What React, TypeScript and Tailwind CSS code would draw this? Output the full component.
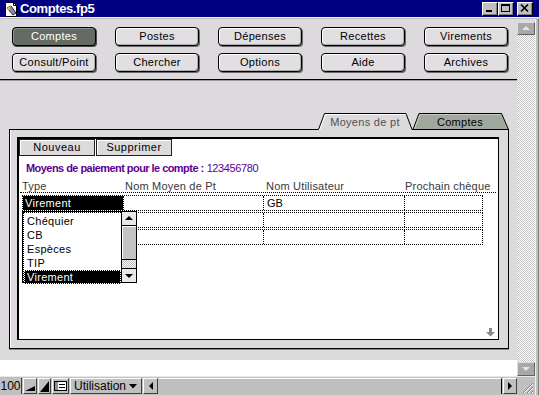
function NavButton({ label, active = false }: { label: string; active?: boolean }) {
  return (
    <div
      className={
        active
          ? "flex h-[19px] w-[84px] items-center justify-center rounded-[4px] border border-black bg-[#646b64] tracking-[0.3px] text-white shadow-[inset_1px_1px_0_#8c928c,1px_1px_0_#4a4a4a]"
          : "flex h-[19px] w-[84px] items-center justify-center rounded-[4px] border border-black bg-[#e2dfe2] tracking-[0.3px] shadow-[inset_1px_1px_0_#ffffff,inset_-1px_-1px_0_#aeabae,1px_1px_0_#6a6a6a]"
      }
    >
      {label}
    </div>
  );
}

function TitleIcon() {
  return (
    <svg width="16" height="16" viewBox="0 0 16 16">
      <path d="M2.5 1.5H10.5L13.5 4.5V15.5H2.5Z" fill="#fff" stroke="#000" />
      <path d="M10.5 1.5V4.5H13.5" fill="none" stroke="#000" />
      <path d="M4 7L8 5L13 12L10 14Z" fill="#8a8fb0" stroke="#000" strokeWidth="0.8" />
      <path d="M4 7L6 10L8 5Z" fill="#e8c040" />
    </svg>
  );
}

function WinButton({ kind }: { kind: "min" | "max" | "close" }) {
  return (
    <div className="flex h-[14px] w-[16px] items-center justify-center border border-b-black border-l-white border-r-black border-t-white bg-[#c0c0c0] shadow-[inset_-1px_-1px_0_#808080]">
      <svg width="10" height="9" viewBox="0 0 10 9">
        {kind === "min" && <rect x="1" y="6" width="6" height="2" fill="#000" />}
        {kind === "max" && (
          <>
            <rect x="0.5" y="0.5" width="8" height="7" fill="none" stroke="#000" />
            <rect x="0.5" y="0.5" width="8" height="1.5" fill="#000" />
          </>
        )}
        {kind === "close" && <path d="M1 0.5L8 7.5M8 0.5L1 7.5" stroke="#000" strokeWidth="1.6" />}
      </svg>
    </div>
  );
}

function ArrowBox({ dir, dim = false }: { dir: "up" | "down" | "left" | "right"; dim?: boolean }) {
  const fill = dim ? "#e4e4e4" : "#000";
  const d =
    dir === "up"
      ? "M1 6L5 2L9 6Z"
      : dir === "down"
      ? "M1 3L5 7L9 3Z"
      : dir === "left"
      ? "M7 1L3 5L7 9Z"
      : "M3 1L7 5L3 9Z";
  return (
    <svg width="10" height="10" viewBox="0 0 10 10">
      <path d={d} fill={fill} />
    </svg>
  );
}

function TabStrip() {
  return (
    <div className="relative ml-[9px] mt-[32px] h-[17px] w-[500px]">
      <svg className="absolute inset-0" width="500" height="17" viewBox="0 0 500 17">
        <path d="M0 16.5H309.5" stroke="#000" />
        <path d="M309.5 16.5L315.5 0.5H397L403 16.5" fill="#dddadd" stroke="#000" />
        <path d="M311 16.5L316.5 1.5H396.5" fill="none" stroke="#fff" />
        <path d="M404 16.5L410 0.5H492.5L499.5 16.5Z" fill="#a1a99f" stroke="#000" />
        <path d="M405.5 16L411 1.5H492" fill="none" stroke="#c8cec6" />
        <path d="M403 16.5H500" stroke="#000" />
      </svg>
      <div className="relative flex h-[17px] items-center pl-[309px] pt-[1px] tracking-[0.3px]">
        <span className="w-[94px] text-center text-[#505050]">Moyens de pt</span>
        <span className="w-[96px] text-center">Comptes</span>
      </div>
    </div>
  );
}

function Panel() {
  const items = ["Chéquier", "CB", "Espèces", "TIP", "Virement"];
  return (
    <div className="ml-[9px] h-[219px] w-[500px] border-x border-b border-black bg-[#dddadd] pl-[7px] pt-[7px] shadow-[inset_1px_0_0_#ffffff,0_1px_0_#8a8a8a]">
      <div className="relative h-[203px] w-[482px] border-b border-l-2 border-r border-t-2 border-black bg-white">
        <div className="flex">
          <div className="h-[17px] w-[76px] border border-[#202020] bg-[#dddadd] text-center leading-[15px] tracking-[0.5px] shadow-[inset_1px_1px_0_#ffffff]">
            Nouveau
          </div>
          <div className="ml-[1px] h-[17px] w-[76px] border border-[#202020] bg-[#dddadd] text-center leading-[15px] tracking-[0.5px] shadow-[inset_1px_1px_0_#ffffff]">
            Supprimer
          </div>
        </div>

        <div className="mt-[5px] pl-[7px] leading-[14px] text-[#5e0092]">
          <span className="font-bold tracking-[-0.55px]">Moyens de paiement pour le compte :</span>{" "}
          <span className="tracking-[-0.4px]">123456780</span>
        </div>

        {/* column headers */}
        <div className="ml-[1px] mt-[6px] flex h-[12px] w-[476px] border-b border-dotted border-black pl-[2px] leading-[11px] tracking-[0.2px] text-[#383838]">
          <span className="w-[103px]">Type</span>
          <span className="w-[141px]">Nom Moyen de Pt</span>
          <span className="w-[139px]">Nom Utilisateur</span>
          <span>Prochain chèque</span>
        </div>

        {/* rows */}
        <div className="ml-[3px] mt-[2px] flex flex-col gap-[1px]">
          {[0, 1, 2].map(i => (
            <div key={i} className="flex h-[16px] w-[461px] border border-dotted border-black leading-[14px]">
              {i === 0 ? (
                <div className="w-[100px] bg-black pl-[2px] tracking-[0.3px] text-white">Virement</div>
              ) : (
                <div className="w-[100px]" />
              )}
              <div className="w-[140px] border-l border-dotted border-black" />
              <div className="w-[141px] border-l border-dotted border-black pl-[3px]">{i === 0 ? "GB" : ""}</div>
              <div className="flex-1 border-l border-dotted border-black" />
            </div>
          ))}
        </div>

        {/* open popup list */}
        <div className="absolute left-[3px] top-[72px] flex h-[72px] w-[115px] border border-black bg-white tracking-[0.3px]">
          <div className="flex w-[99px] flex-col border-l border-t border-dotted border-black pt-[1px]">
            {items.map(it =>
              it === "Virement" ? (
                <div key={it} className="h-[14px] border border-dotted border-white bg-black pl-[2px] leading-[12px] text-white">
                  {it}
                </div>
              ) : (
                <div key={it} className="h-[14px] pl-[3px] leading-[14px]">
                  {it}
                </div>
              )
            )}
          </div>
          <div className="flex w-[15px] flex-col border-l border-black">
            <div className="flex h-[14px] items-center justify-center border-b border-black bg-[#e8e8e8]">
              <ArrowBox dir="up" />
            </div>
            <div className="h-[34px] border-b border-black bg-[#c4c4c4] shadow-[inset_1px_1px_0_#ffffff]" />
            <div className="flex-1 bg-[repeating-conic-gradient(#ffffff_0%_25%,#b8b8b8_0%_50%)] bg-[length:2px_2px]" />
            <div className="flex h-[14px] items-center justify-center border-t border-black bg-[#e8e8e8]">
              <ArrowBox dir="down" />
            </div>
          </div>
        </div>

        <svg className="absolute bottom-[2px] right-[3px]" width="9" height="9" viewBox="0 0 9 9">
          <path d="M3 0H6V4H9L4.5 8.5L0 4H3Z" fill="#8a8a8a" />
        </svg>
      </div>
    </div>
  );
}

function StatusBar() {
  return (
    <div className="flex h-[19px] items-center gap-[1px] border-t border-[#e8e8e8] bg-[#c0c0c0] text-[12px]">
      <div className="flex h-[16px] w-[22px] items-center justify-center border-r border-[#404040] leading-none">100</div>
      <div className="flex h-[16px] w-[14px] items-end justify-center border border-b-[#404040] border-l-white border-r-[#404040] border-t-white pb-[2px]">
        <svg width="10" height="6" viewBox="0 0 10 6">
          <path d="M0 6L10 1V6Z" fill="#000" />
        </svg>
      </div>
      <div className="flex h-[16px] w-[13px] items-end justify-center border border-b-[#404040] border-l-white border-r-[#404040] border-t-white pb-[1px]">
        <svg width="9" height="11" viewBox="0 0 9 11">
          <path d="M0 11L9 0V11Z" fill="#000" />
        </svg>
      </div>
      <div className="flex h-[16px] w-[17px] items-center justify-center border border-b-[#404040] border-l-white border-r-[#404040] border-t-white">
        <svg width="13" height="10" viewBox="0 0 13 10">
          <rect x="0.5" y="0.5" width="12" height="9" fill="#fff" stroke="#000" />
          <rect x="1" y="1" width="3" height="8" fill="#909090" />
          <path d="M5 3.5H11M5 6.5H11" stroke="#000" />
        </svg>
      </div>
      <div className="flex h-[16px] w-[72px] items-center border border-b-[#404040] border-l-white border-r-[#404040] border-t-white pl-[3px] leading-none">
        <span className="w-[55px]">Utilisation</span>
        <svg width="8" height="5" viewBox="0 0 8 5">
          <path d="M0 0H8L4 4.5Z" fill="#000" />
        </svg>
      </div>
      <div className="flex h-[16px] w-[15px] items-center justify-center border border-b-[#404040] border-l-white border-r-[#404040] border-t-white">
        <ArrowBox dir="left" />
      </div>
      <div className="h-[16px] flex-1 border-r border-t border-r-black border-t-white bg-[#c0c0c0]" />
      <div className="flex h-[16px] w-[14px] items-center justify-center border border-b-[#404040] border-l-white border-r-[#404040] border-t-white">
        <ArrowBox dir="right" />
      </div>
    </div>
  );
}

export default function App() {
  return (
    <div className="flex h-[395px] w-[539px] flex-col overflow-hidden bg-[#c0c0c0] font-['Liberation_Sans',Arial,sans-serif] text-[11px] text-black">
      {/* title bar */}
      <div className="flex h-[17px] items-center bg-[#000080] pl-[3px]">
        <TitleIcon />
        <span className="ml-[1px] text-[13px] font-bold tracking-[-0.4px] text-white">Comptes.fp5</span>
        <div className="ml-auto mr-[6px] flex items-center">
          <WinButton kind="min" />
          <WinButton kind="max" />
          <div className="w-[3px]" />
          <WinButton kind="close" />
        </div>
      </div>
      <div className="h-[2px] border-t border-[#f4f4f4] bg-[#c0c0c0]" />

      <div className="flex flex-1">
        <div className="flex w-[517px] flex-col">
          {/* layout area */}
          <div className="flex h-[341px] flex-col bg-[#dddadd]">
            <div className="flex flex-col gap-[7px] pl-[12px] pt-[8px]">
              <div className="flex gap-[19px]">
                <NavButton label="Comptes" active />
                <NavButton label="Postes" />
                <NavButton label="Dépenses" />
                <NavButton label="Recettes" />
                <NavButton label="Virements" />
              </div>
              <div className="flex gap-[19px]">
                <NavButton label="Consult/Point" />
                <NavButton label="Chercher" />
                <NavButton label="Options" />
                <NavButton label="Aide" />
                <NavButton label="Archives" />
              </div>
            </div>
            <div className="mt-[7px] h-[2px] border-t border-black bg-[#9c9a9c]" />
            <TabStrip />
            <Panel />
          </div>
          <div className="h-[16px] bg-white" />
          <StatusBar />
        </div>

        {/* vertical scrollbar */}
        <div className="flex w-[18px] flex-col">
          <div className="flex h-[357px] flex-col bg-[#dddadd]">
            <div className="h-[3px]" />
            <div className="flex h-[13px] items-center justify-center border border-b-[#606060] border-l-[#e0e0e0] border-r-[#606060] border-t-[#e0e0e0] bg-[#a8a8a8]">
              <ArrowBox dir="up" dim />
            </div>
            <div className="flex-1 bg-[repeating-conic-gradient(#ffffff_0%_25%,#c4c4c4_0%_50%)] bg-[length:2px_2px]" />
            <div className="flex h-[14px] items-center justify-center border border-b-[#606060] border-l-[#e0e0e0] border-r-[#606060] border-t-[#e0e0e0] bg-[#a8a8a8]">
              <ArrowBox dir="down" dim />
            </div>
          </div>
          <div className="flex h-[19px] items-end justify-end border-t border-[#e8e8e8] bg-[#c0c0c0] pb-[1px] pr-[1px]">
            <svg width="12" height="12" viewBox="0 0 12 12">
              <path d="M11 1L1 11M11 5L5 11M11 9L9 11" stroke="#808080" />
              <path d="M11 2L2 11M11 6L6 11M11 10L10 11" stroke="#ffffff" />
            </svg>
          </div>
        </div>

        {/* window frame */}
        <div className="w-[4px] border-l border-r border-l-[#f0f0f0] border-r-[#808080] bg-[#c0c0c0]" />
      </div>
    </div>
  );
}
